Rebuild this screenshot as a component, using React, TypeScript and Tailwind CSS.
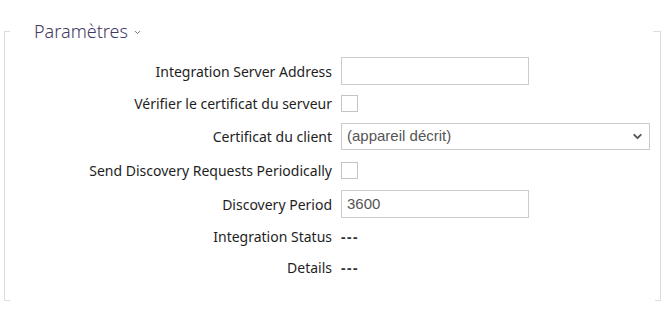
import { ChevronDown } from 'lucide-react'

type Row = {
  label: string
  kind: 'text' | 'check' | 'select' | 'value'
  value?: string
  width?: string
  h: string
}

const ROWS: Row[] = [
  { label: 'Integration Server Address', kind: 'text', value: '', width: 'w-[188px]', h: 'h-[32px]' },
  { label: 'Vérifier le certificat du serveur', kind: 'check', h: 'h-[32px]' },
  { label: 'Certificat du client', kind: 'select', value: '(appareil décrit)', h: 'h-[34px]' },
  { label: 'Send Discovery Requests Periodically', kind: 'check', h: 'h-[34px]' },
  { label: 'Discovery Period', kind: 'text', value: '3600', width: 'w-[188px]', h: 'h-[34px]' },
  { label: 'Integration Status', kind: 'value', value: '---', h: 'h-[30px]' },
  { label: 'Details', kind: 'value', value: '---', h: 'h-[32px]' },
]

function Control({ row }: { row: Row }) {
  switch (row.kind) {
    case 'text':
      return (
        <div className={`${row.width} flex h-[28px] items-center border border-[#cccccc] bg-white px-[5px] font-['Liberation_Sans',sans-serif] text-[15px] text-[#555]`}>
          {row.value}
        </div>
      )
    case 'check':
      return <div className="h-[17px] w-[17px] border border-[#c4c4c4] bg-white" />
    case 'select':
      return (
        <div className="flex h-[27px] w-[309px] items-center justify-between border border-[#cccccc] bg-white pl-[5px] pr-[5px] font-['Liberation_Sans',sans-serif] text-[15px] text-[#555]">
          <span>{row.value}</span>
          <ChevronDown size={13} strokeWidth={3.5} className="text-[#555]" />
        </div>
      )
    default:
      return <span className="font-bold tracking-[1.5px] text-[#333]">{row.value}</span>
  }
}

export default function App() {
  return (
    <div className="h-[321px] w-[671px] bg-white pt-[31px] font-['Noto_Sans',sans-serif]">
      <div className="relative ml-[4px] h-[270px] w-[657px] border-x border-[#dddddd]">
        <span className="absolute left-0 top-0 h-px w-[5px] bg-[#dddddd]" />
        <span className="absolute right-0 top-0 h-px w-[7px] bg-[#dddddd]" />
        <span className="absolute bottom-0 left-0 h-px w-[5px] bg-[#dddddd]" />
        <span className="absolute bottom-0 right-0 h-px w-[5px] bg-[#dddddd]" />

        <div className="absolute left-[28px] top-[-13px] flex items-center gap-[5px] bg-white px-[1px] text-[18px] font-light leading-[26px] text-[#44385f]">
          <span>Paramètres</span>
          <ChevronDown size={9} strokeWidth={2.5} className="mt-[2px] text-[#666]" />
        </div>

        <div className="flex flex-col pt-[24px] text-[14px] text-[#1e1e1e]">
          {ROWS.map((r) => (
            <div key={r.label} className={`flex items-center gap-[9px] ${r.h}`}>
              <div className="w-[327px] text-right">{r.label}</div>
              <Control row={r} />
            </div>
          ))}
        </div>
      </div>
    </div>
  )
}
